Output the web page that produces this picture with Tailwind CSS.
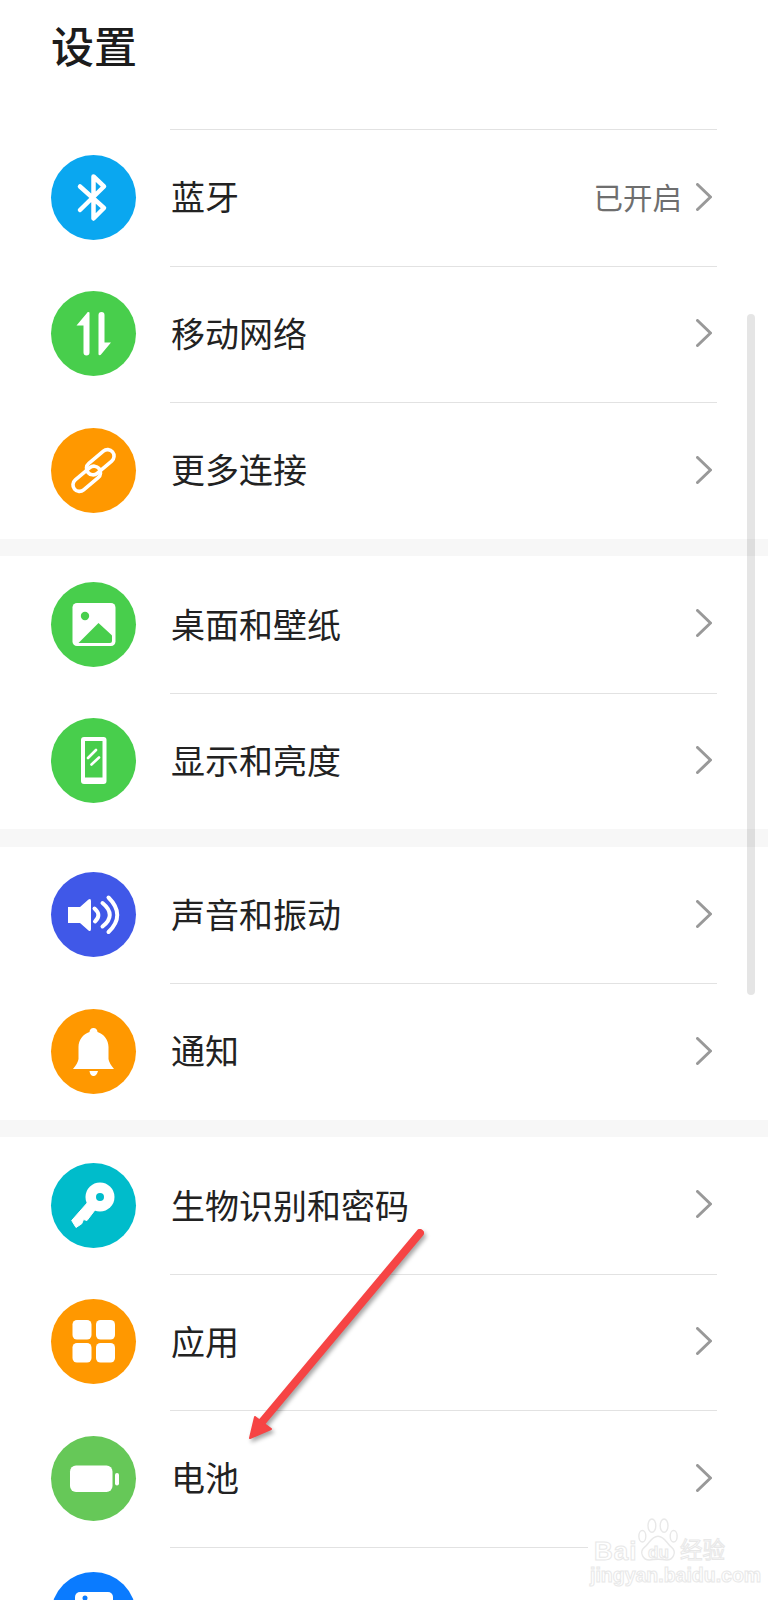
<!DOCTYPE html>
<html lang="zh-CN">
<head>
    <meta charset="UTF-8">
    <meta name="viewport" content="width=device-width, initial-scale=1.0">
    <title>设置</title>
    <script src="https://cdn.jsdelivr.net/npm/@tailwindcss/browser@4"></script>
</head>
<body class="bg-white">
<div class="relative w-[768px] h-[1600px] overflow-hidden bg-white text-[#222] font-['Noto_Sans_CJK_SC',sans-serif]">
    <header class="h-[129px] pl-[51px] pt-[16px]">
        <h1 class="text-[43px] leading-[56px] font-medium text-[#1c1c1c]">设置</h1>
    </header>

    <!-- 连接 -->
    <section>
        <div class="flex items-center h-[136.5px] pl-[51px]">
            <div class="w-[85px] h-[85px] rounded-full bg-[#0aa7f0] shrink-0">
                <svg viewBox="0 0 85 85" class="w-full h-full" fill="none" stroke="#fff" stroke-width="4.5" stroke-linecap="round" stroke-linejoin="round"><path d="M29 31.5 53 53 42.5 63.5V21.5L53 31.5 29 55"/></svg>
            </div>
            <div class="flex items-center flex-1 h-full ml-[34px] mr-[51px] pl-[1px] pr-[5px] border-t border-[#e2e2e2]">
                <span class="flex-1 text-[34px] -translate-y-[2px]">蓝牙</span>
                <span class="mr-[14px] text-[29.5px] text-[#6e6e6e] -translate-y-[2px]">已开启</span>
                <svg viewBox="0 0 16 28" class="w-[16px] h-[28px] -mt-[2px]" fill="none" stroke="#999" stroke-width="3" stroke-linecap="round" stroke-linejoin="round"><path d="M1.5 1.5 14.5 14 1.5 26.5"/></svg>
            </div>
        </div>
        <div class="flex items-center h-[136.5px] pl-[51px]">
            <div class="w-[85px] h-[85px] rounded-full bg-[#48ce4c] shrink-0">
                <svg viewBox="0 0 85 85" class="w-full h-full" fill="#fff"><path d="M38.5 21.5V61.5a3 3 0 0 1-6 0V34.5H25.5L36 22a1.5 1.5 0 0 1 2.5-.5Z"/><path d="M47.5 63.5V24a3 3 0 0 1 6 0V51.5H60L50 63.5a1.5 1.5 0 0 1-2.5 0Z"/></svg>
            </div>
            <div class="flex items-center flex-1 h-full ml-[34px] mr-[51px] pl-[1px] pr-[5px] border-t border-[#e2e2e2]">
                <span class="flex-1 text-[34px] -translate-y-[2px]">移动网络</span>
                <svg viewBox="0 0 16 28" class="w-[16px] h-[28px] -mt-[2px]" fill="none" stroke="#999" stroke-width="3" stroke-linecap="round" stroke-linejoin="round"><path d="M1.5 1.5 14.5 14 1.5 26.5"/></svg>
            </div>
        </div>
        <div class="flex items-center h-[136.5px] pl-[51px]">
            <div class="w-[85px] h-[85px] rounded-full bg-[#ff9800] shrink-0">
                <svg viewBox="0 0 85 85" class="w-full h-full" fill="none" stroke="#fff" stroke-width="3.6"><g transform="rotate(-40 42.5 42.5)"><rect x="37" y="34" width="32" height="13" rx="6.5"/><rect x="16" y="38" width="32" height="13" rx="6.5"/></g></svg>
            </div>
            <div class="flex items-center flex-1 h-full ml-[34px] mr-[51px] pl-[1px] pr-[5px] border-t border-[#e2e2e2]">
                <span class="flex-1 text-[34px] -translate-y-[2px]">更多连接</span>
                <svg viewBox="0 0 16 28" class="w-[16px] h-[28px] -mt-[2px]" fill="none" stroke="#999" stroke-width="3" stroke-linecap="round" stroke-linejoin="round"><path d="M1.5 1.5 14.5 14 1.5 26.5"/></svg>
            </div>
        </div>
    </section>
    <div class="h-[17.5px] bg-[#f7f7f7]"></div>

    <!-- 显示 -->
    <section>
        <div class="flex items-center h-[136.5px] pl-[51px]">
            <div class="w-[85px] h-[85px] rounded-full bg-[#48ce4c] shrink-0">
                <svg viewBox="0 0 85 85" class="w-full h-full"><rect x="21.5" y="21" width="43" height="43" rx="4.5" fill="#fff"/><circle cx="34" cy="34" r="4.2" fill="#48ce4c"/><path d="M27.5 61 47.5 41 60 52.5a2 2 0 0 1 1 2V59a2 2 0 0 1-2 2Z" fill="#48ce4c"/></svg>
            </div>
            <div class="flex items-center flex-1 h-full ml-[34px] mr-[51px] pl-[1px] pr-[5px]">
                <span class="flex-1 text-[34px] -translate-y-[1px]">桌面和壁纸</span>
                <svg viewBox="0 0 16 28" class="w-[16px] h-[28px] -mt-[2px]" fill="none" stroke="#999" stroke-width="3" stroke-linecap="round" stroke-linejoin="round"><path d="M1.5 1.5 14.5 14 1.5 26.5"/></svg>
            </div>
        </div>
        <div class="flex items-center h-[136.5px] pl-[51px]">
            <div class="w-[85px] h-[85px] rounded-full bg-[#48ce4c] shrink-0">
                <svg viewBox="0 0 85 85" class="w-full h-full"><rect x="30" y="19" width="25.5" height="47" rx="3" fill="#fff"/><rect x="34" y="23" width="17.5" height="36.5" fill="#48ce4c"/><path d="M37 40 45 32M40.5 46.5 48 39.5" stroke="#fff" stroke-width="2.6" stroke-linecap="round"/></svg>
            </div>
            <div class="flex items-center flex-1 h-full ml-[34px] mr-[51px] pl-[1px] pr-[5px] border-t border-[#e2e2e2]">
                <span class="flex-1 text-[34px] -translate-y-[2px]">显示和亮度</span>
                <svg viewBox="0 0 16 28" class="w-[16px] h-[28px] -mt-[2px]" fill="none" stroke="#999" stroke-width="3" stroke-linecap="round" stroke-linejoin="round"><path d="M1.5 1.5 14.5 14 1.5 26.5"/></svg>
            </div>
        </div>
    </section>
    <div class="h-[17.5px] bg-[#f7f7f7]"></div>

    <!-- 声音 / 通知 -->
    <section>
        <div class="flex items-center h-[136.5px] pl-[51px]">
            <div class="w-[85px] h-[85px] rounded-full bg-[#4058e8] shrink-0">
                <svg viewBox="0 0 85 85" class="w-full h-full"><path d="M17 35H29L37.5 27.5Q40 26 40 29V57Q40 60 37.5 58.5L29 51H17Z" fill="#fff"/><path d="M43.5 36.5Q51 43 44 49.5M51.5 31Q66 43 51.5 54.5M57.5 25.5Q75 43 57.5 60" fill="none" stroke="#fff" stroke-width="4" stroke-linecap="round"/></svg>
            </div>
            <div class="flex items-center flex-1 h-full ml-[34px] mr-[51px] pl-[1px] pr-[5px]">
                <span class="flex-1 text-[34px] -translate-y-[1px]">声音和振动</span>
                <svg viewBox="0 0 16 28" class="w-[16px] h-[28px] -mt-[2px]" fill="none" stroke="#999" stroke-width="3" stroke-linecap="round" stroke-linejoin="round"><path d="M1.5 1.5 14.5 14 1.5 26.5"/></svg>
            </div>
        </div>
        <div class="flex items-center h-[136.5px] pl-[51px]">
            <div class="w-[85px] h-[85px] rounded-full bg-[#ff9800] shrink-0">
                <svg viewBox="0 0 85 85" class="w-full h-full" fill="#fff"><path d="M42.5 19C45 19 46.5 21 46.5 23C53 25 57.5 31 57.5 38V50Q58 54 63 60H22Q27 54 27.5 50V38C27.5 31 32 25 38.5 23C38.5 21 40 19 42.5 19Z"/><path d="M38.5 62H47C46 66 44 67 42.5 67S39 66 38.5 62Z"/></svg>
            </div>
            <div class="flex items-center flex-1 h-full ml-[34px] mr-[51px] pl-[1px] pr-[5px] border-t border-[#e2e2e2]">
                <span class="flex-1 text-[34px] -translate-y-[2px]">通知</span>
                <svg viewBox="0 0 16 28" class="w-[16px] h-[28px] -mt-[2px]" fill="none" stroke="#999" stroke-width="3" stroke-linecap="round" stroke-linejoin="round"><path d="M1.5 1.5 14.5 14 1.5 26.5"/></svg>
            </div>
        </div>
    </section>
    <div class="h-[17.5px] bg-[#f7f7f7]"></div>

    <!-- 安全 / 应用 -->
    <section>
        <div class="flex items-center h-[136.5px] pl-[51px]">
            <div class="w-[85px] h-[85px] rounded-full bg-[#00bccb] shrink-0">
                <svg viewBox="0 0 85 85" class="w-full h-full"><circle cx="49" cy="34" r="14.5" fill="#fff"/><circle cx="49" cy="34" r="4" fill="#00bccb"/><path d="M37 39 20.7 57.5 25 64.5 30.7 60.8 32.5 56.5 36 57.5 44 47Z" fill="#fff" stroke="#fff" stroke-width="1" stroke-linejoin="round"/></svg>
            </div>
            <div class="flex items-center flex-1 h-full ml-[34px] mr-[51px] pl-[1px] pr-[5px]">
                <span class="flex-1 text-[34px] -translate-y-[1px]">生物识别和密码</span>
                <svg viewBox="0 0 16 28" class="w-[16px] h-[28px] -mt-[2px]" fill="none" stroke="#999" stroke-width="3" stroke-linecap="round" stroke-linejoin="round"><path d="M1.5 1.5 14.5 14 1.5 26.5"/></svg>
            </div>
        </div>
        <div class="flex items-center h-[136.5px] pl-[51px]">
            <div class="w-[85px] h-[85px] rounded-full bg-[#ff9800] shrink-0">
                <svg viewBox="0 0 85 85" class="w-full h-full" fill="#fff"><rect x="21.5" y="21" width="19" height="19.5" rx="4.5"/><rect x="45" y="21" width="19" height="19.5" rx="4.5"/><rect x="21.5" y="44" width="19" height="19.5" rx="4.5"/><rect x="45" y="44" width="19" height="19.5" rx="4.5"/></svg>
            </div>
            <div class="flex items-center flex-1 h-full ml-[34px] mr-[51px] pl-[1px] pr-[5px] border-t border-[#e2e2e2]">
                <span class="flex-1 text-[34px] -translate-y-[2px]">应用</span>
                <svg viewBox="0 0 16 28" class="w-[16px] h-[28px] -mt-[2px]" fill="none" stroke="#999" stroke-width="3" stroke-linecap="round" stroke-linejoin="round"><path d="M1.5 1.5 14.5 14 1.5 26.5"/></svg>
            </div>
        </div>
        <div class="flex items-center h-[136.5px] pl-[51px]">
            <div class="w-[85px] h-[85px] rounded-full bg-[#66c858] shrink-0">
                <svg viewBox="0 0 85 85" class="w-full h-full" fill="#fff"><rect x="19" y="29.5" width="42.5" height="26.5" rx="6"/><rect x="64" y="37" width="4" height="12.5" rx="2"/></svg>
            </div>
            <div class="flex items-center flex-1 h-full ml-[34px] mr-[51px] pl-[1px] pr-[5px] border-t border-[#e2e2e2]">
                <span class="flex-1 text-[34px] -translate-y-[2px]">电池</span>
                <svg viewBox="0 0 16 28" class="w-[16px] h-[28px] -mt-[2px]" fill="none" stroke="#999" stroke-width="3" stroke-linecap="round" stroke-linejoin="round"><path d="M1.5 1.5 14.5 14 1.5 26.5"/></svg>
            </div>
        </div>
        <div class="flex items-center h-[136.5px] pl-[51px]">
            <div class="w-[85px] h-[85px] rounded-full bg-[#0a7bff] shrink-0">
                <svg viewBox="0 0 85 85" class="w-full h-full"><rect x="24" y="20" width="38" height="44" rx="5" fill="#fff"/><circle cx="34" cy="26" r="2.5" fill="#0a7bff"/></svg>
            </div>
            <div class="flex-1 h-full ml-[34px] mr-[51px] border-t border-[#e2e2e2]"></div>
        </div>
    </section>

    <!-- 滚动条 -->
    <div class="absolute left-[747px] top-[314px] w-[8px] h-[681px] rounded-full bg-black/10"></div>

    <!-- 红色箭头标注 -->
    <svg class="absolute left-[240px] top-[1225px] w-[190px] h-[225px] drop-shadow-[2px_3px_2px_rgba(0,0,0,0.35)]" viewBox="240 1225 190 225">
        <path d="M420 1233 262 1422" stroke="#f64444" stroke-width="8" stroke-linecap="round" fill="none"/>
        <path d="M250 1438 255 1417 271 1429Z" fill="#f64444" stroke="#f64444" stroke-width="2" stroke-linejoin="round"/>
    </svg>

    <!-- 水印 -->
    <div class="absolute left-[588px] top-[1518px] w-[142px] h-[68px] bg-white font-['Liberation_Sans',sans-serif] text-white [-webkit-text-stroke:1px_#e8e8e8]">
        <svg class="absolute left-[50px] top-0 w-[40px] h-[44px]" viewBox="0 0 46 46" fill="#fff" stroke="#e8e8e8" stroke-width="1.6" preserveAspectRatio="none">
            <ellipse cx="5" cy="19" rx="4" ry="6"/><ellipse cx="16" cy="8" rx="4.5" ry="7"/><ellipse cx="30" cy="8" rx="4.5" ry="7"/><ellipse cx="41" cy="19" rx="4" ry="6"/>
            <path d="M23 19C15 19 13 27 7 31C1 36 6 44 13 44C19 43 27 43 33 44C40 44 45 36 39 31C33 27 31 19 23 19Z"/>
        </svg>
        <span class="absolute left-[6px] top-[18px] text-[26px] leading-[30px] font-bold tracking-[1px]">Bai</span>
        <span class="absolute left-[60px] top-[25px] text-[17px] leading-[20px] font-bold">du</span>
        <span class="absolute left-[92px] top-[17px] text-[22.5px] leading-[26px] font-['Noto_Sans_CJK_SC',sans-serif]">经验</span>
        <span class="absolute left-[2px] top-[46px] text-[19.5px] leading-[22px] font-bold">jingyan.baidu.com</span>
    </div>
</div>
</body>
</html>
